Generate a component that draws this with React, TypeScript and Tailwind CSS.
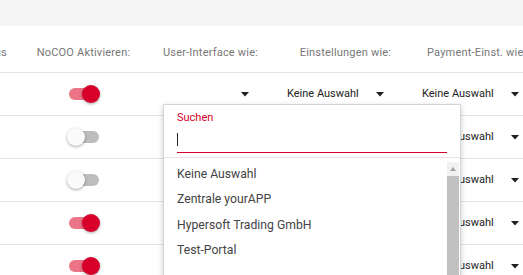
const rows = [true, false, false, true, true];

function Toggle({ on }: { on: boolean }) {
  return (
    <div className="relative w-[34px] h-[18px]">
      <div
        className={`absolute left-[2px] top-[3px] w-[30px] h-[12px] rounded-full ${
          on ? "bg-[#eb7486]" : "bg-[#bdbdbd]"
        }`}
      />
      <div
        className={`absolute top-0 w-[18px] h-[18px] rounded-full shadow-[0_1px_3px_rgba(0,0,0,0.35)] ${
          on ? "left-[15px] bg-[#d6002a]" : "left-0 bg-[#fafafa]"
        }`}
      />
    </div>
  );
}

function Arrow() {
  return (
    <svg width="8" height="5" viewBox="0 0 8 5" className="shrink-0">
      <path d="M0 0 L8 0 L4 4.5 Z" fill="#1f1f1f" />
    </svg>
  );
}

function SelectCell({ value }: { value: string }) {
  return (
    <div className="w-[135px] shrink-0 pl-[9px]">
      <div className="w-[97px] flex items-center justify-between text-[11px] text-[#222]">
        <span>{value}</span>
        <Arrow />
      </div>
    </div>
  );
}

export default function App() {
  const options = ["Keine Auswahl", "Zentrale yourAPP", "Hypersoft Trading GmbH", "Test-Portal"];

  return (
    <div className="relative h-[275px] overflow-hidden bg-[#f5f5f5] pt-[26px] font-[Roboto,sans-serif]">
      <div className="bg-white h-full">
        {/* Header */}
        <div className="flex items-end h-[47px] pb-[11px] border-b border-[#e3e3e3] text-[11px] tracking-[0.2px] text-[#777] whitespace-nowrap">
          <div className="w-[24px] shrink-0 flex justify-end pr-[17px]">Status</div>
          <div className="w-[119px] shrink-0 flex justify-center">NoCOO Aktivieren:</div>
          <div className="w-[135px] shrink-0 flex justify-center">User-Interface wie:</div>
          <div className="w-[135px] shrink-0 flex justify-center">Einstellungen wie:</div>
          <div className="w-[135px] shrink-0 pl-[14px]">Payment-Einst. wie:</div>
        </div>

        {/* Rows */}
        {rows.map((on, i) => (
          <div key={i} className="flex items-center h-[43px] border-b border-[#e3e3e3] whitespace-nowrap">
            <div className="w-[24px] shrink-0" />
            <div className="w-[119px] shrink-0 flex justify-center">
              <Toggle on={on} />
            </div>
            <SelectCell value="" />
            <SelectCell value="Keine Auswahl" />
            <SelectCell value="Keine Auswahl" />
          </div>
        ))}
      </div>

      {/* Dropdown panel */}
      <div className="absolute left-[163px] top-[104px] w-[298px] h-[200px] bg-white border border-[#d4d4d4] shadow-[0_2px_6px_rgba(0,0,0,0.2)]">
        <div className="px-[13px] pt-[6px] h-[53px] border-b border-[#e6e6e6]">
          <div className="text-[11px] text-[#d6002a] leading-[14px]">Suchen</div>
          <div className="mt-[8px] h-[20px] border-b border-[#d6002a] flex items-start">
            <div className="w-px h-[13px] bg-[#222]" />
          </div>
        </div>
        <div className="flex">
          <div className="flex-1 pt-[3px] text-[12.2px] text-[#444]">
            {options.map((o) => (
              <div key={o} className="h-[25.6px] flex items-center pl-[13px]">
                {o}
              </div>
            ))}
          </div>
          <div className="w-[12px] mr-[1px] mt-[4px] bg-[#f1f1f1] flex flex-col items-center">
            <div className="h-[14px] flex items-center justify-center">
              <svg width="6" height="4" viewBox="0 0 6 4">
                <path d="M0 4 L3 0 L6 4 Z" fill="#a3a3a3" />
              </svg>
            </div>
            <div className="w-[12px] h-[140px] bg-[#c1c1c1]" />
          </div>
        </div>
      </div>
    </div>
  );
}
